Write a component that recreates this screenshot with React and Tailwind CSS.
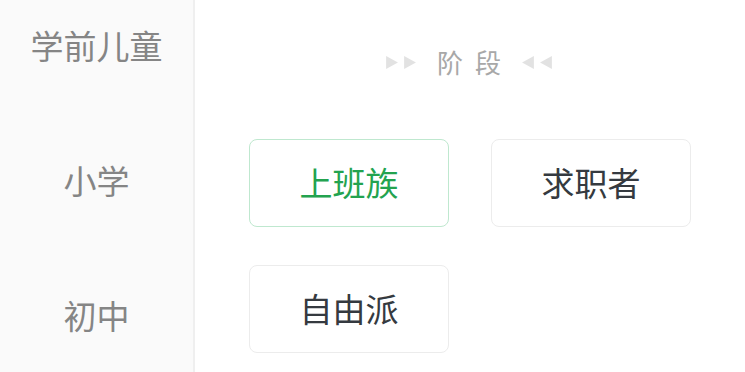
const sideItems = ["学前儿童", "小学", "初中"];

function Tri({ dir }) {
  return (
    <svg width="15" height="15" viewBox="0 0 14 14" className="text-[#e2e2e2]">
      {dir === "right" ? (
        <path d="M2 1 L13 7 L2 13 Z" fill="currentColor" />
      ) : (
        <path d="M12 1 L1 7 L12 13 Z" fill="currentColor" />
      )}
    </svg>
  );
}

function Option({ label, active }) {
  return (
    <div
      className={
        "w-[200px] h-[88px] rounded-[8px] border flex items-center justify-center text-[33px] leading-none pb-[2px] bg-white " +
        (active
          ? "border-[#bfe8cf] text-[#23a34f]"
          : "border-[#ececec] text-[#353a40]")
      }
    >
      {label}
    </div>
  );
}

export default function App() {
  return (
    <div
      className="flex w-[745px] h-[372px] bg-white overflow-hidden"
      style={{ fontFamily: '"Noto Sans CJK SC", "Noto Sans", sans-serif' }}
    >
      <div className="w-[195px] shrink-0 bg-[#fafafa] border-r-2 border-[#efefef] flex flex-col items-center pt-[19px] gap-[83px]">
        {sideItems.map((s) => (
          <div key={s} className="text-[33px] leading-[52px] text-[#858585]">
            {s}
          </div>
        ))}
      </div>
      <div className="flex-1 pl-[54px]">
        <div className="h-[139px] flex items-start pt-[44px] pl-[135px]">
          <div className="flex items-center h-[36px]">
            <div className="flex gap-[3px]">
              <Tri dir="right" />
              <Tri dir="right" />
            </div>
            <div className="ml-[20px] mr-[8px] text-[26px] tracking-[12px] text-[#a8a8a8] leading-none">
              阶段
            </div>
            <div className="flex gap-[3px]">
              <Tri dir="left" />
              <Tri dir="left" />
            </div>
          </div>
        </div>
        <div className="grid grid-cols-[200px_200px] gap-x-[42px] gap-y-[38px]">
          <Option label="上班族" active />
          <Option label="求职者" />
          <Option label="自由派" />
        </div>
      </div>
    </div>
  );
}
